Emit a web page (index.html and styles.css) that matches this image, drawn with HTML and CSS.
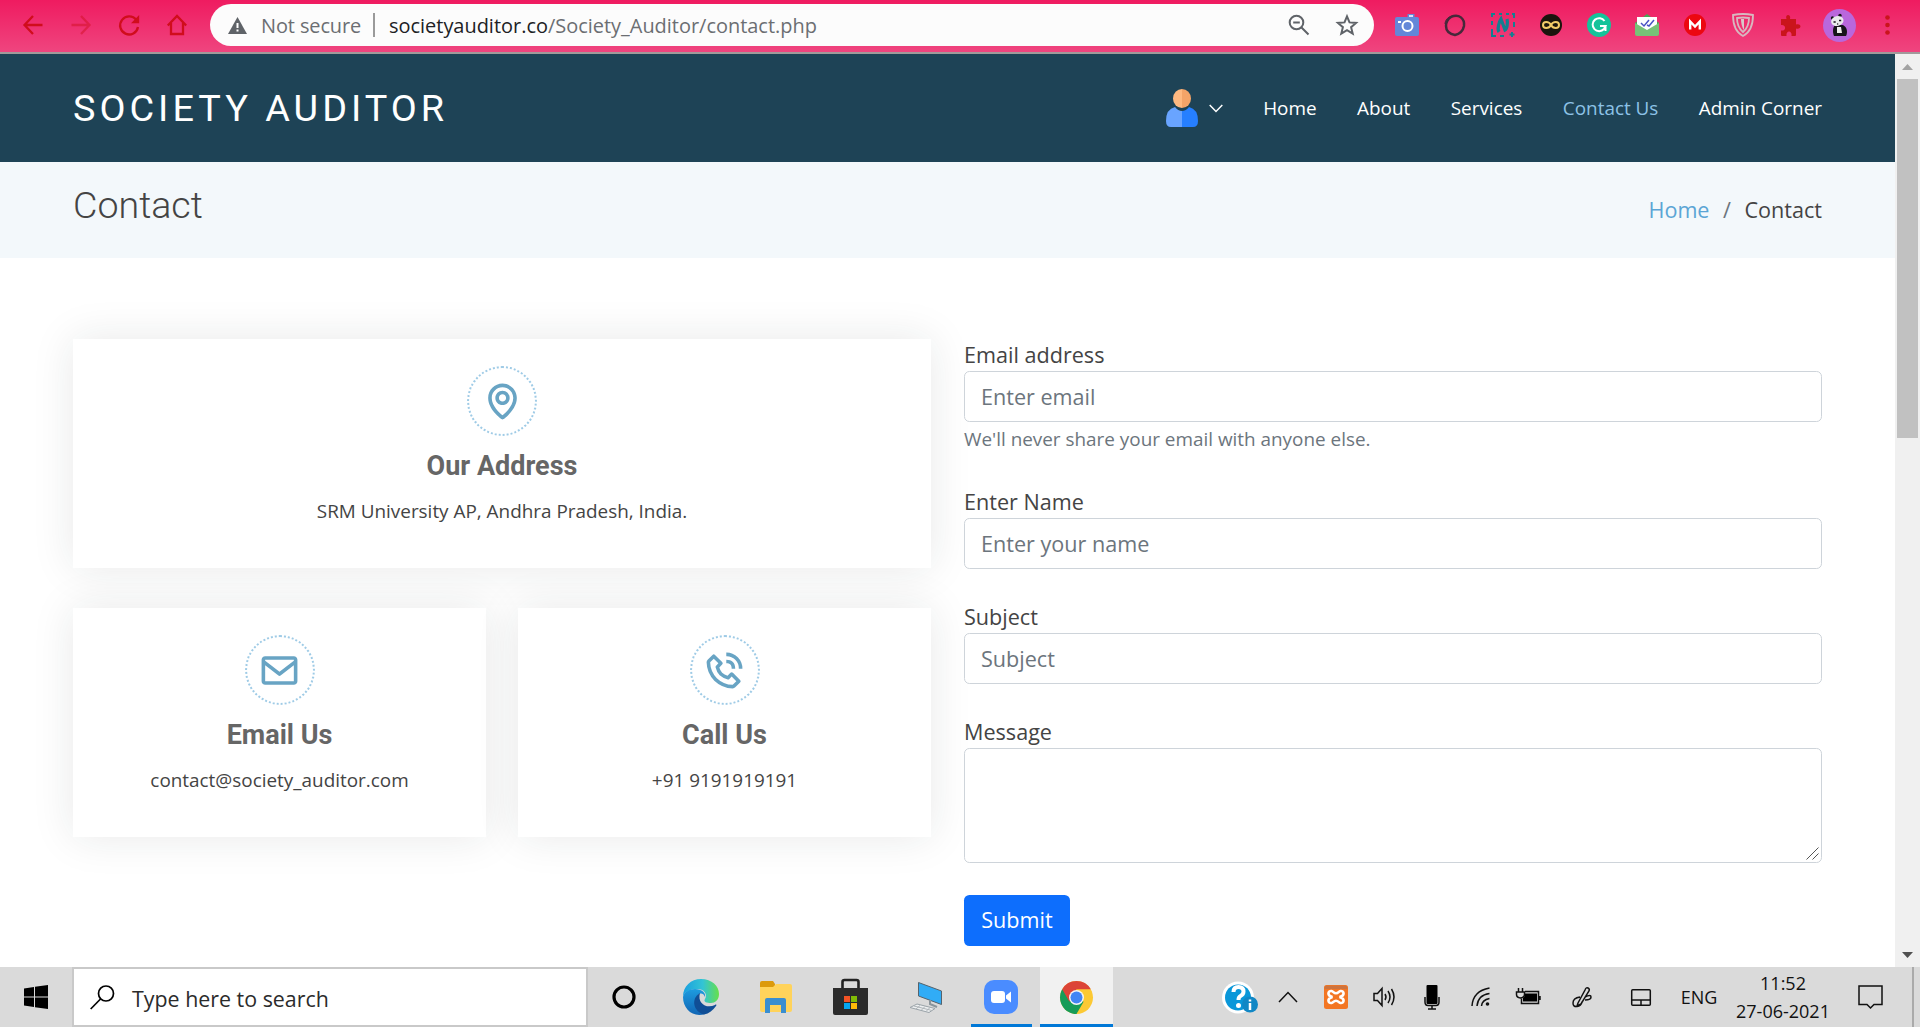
FILE: index.html
```html
<!DOCTYPE html>
<html lang="en">
<head>
<meta charset="utf-8">
<title>Contact - Society Auditor</title>
<link rel="stylesheet" href="styles.css">
</head>
<body>
<div class="toolbar">
  <div class="nav-buttons">
    <span class="cell"><svg width="20" height="20" viewBox="0 0 20 20" class="line"><path d="M19.5 10H2M10 1 1.5 10l8.500 9"/></svg></span>
    <span class="cell faded"><svg width="20" height="20" viewBox="0 0 20 20" class="line"><path d="M.5 10H18M10 1l8.500 9-8.500 9"/></svg></span>
    <span class="cell"><svg width="22" height="22" viewBox="0 0 22 22" class="line"><path d="M18.300 6A9 9 0 1 0 20 13"/><path d="M21.200 1v8.200h-8.200z" fill="#d00d1c" stroke="none"/></svg></span>
    <span class="cell"><svg width="22" height="22" viewBox="0 0 22 22" class="line"><path d="M1.800 11.500 11 2l9.200 9.500M5 9v11h12V9"/></svg></span>
  </div>
  <div class="omnibox">
    <svg class="warn" width="19" height="17" viewBox="0 0 19 17"><path d="M9.500 0 19 17H0z" fill="#5f6368"/><path d="M8.500 6h2v5h-2zM8.500 12.500h2v2h-2z" fill="#fff"/></svg>
    <span class="insecure">Not secure</span>
    <span class="divider"></span>
    <span class="url"><b>societyauditor.co</b>/Society_Auditor/contact.php</span>
    <span class="cell"><svg width="22" height="22" viewBox="0 0 22 22" fill="none" stroke="#5f6368" stroke-width="2"><circle cx="8.500" cy="8.500" r="6.800"/><path d="M13.500 13.500l7 7M5.200 8.500h6.600"/></svg></span>
    <span class="cell"><svg width="22" height="22" viewBox="0 0 22 22" fill="none" stroke="#5f6368" stroke-width="2"><path d="M11 2.300l2.500 6.100 6.600.5-5 4.300 1.600 6.400L11 16.100l-5.700 3.500 1.600-6.400-5-4.300 6.600-.5z"/></svg></span>
  </div>
  <div class="extensions">
    <span class="cell"><svg width="24" height="22" viewBox="0 0 24 22"><rect y="3" width="24" height="19" rx="2" fill="#6487d8"/><path d="M12.500 4V0h7v4z" fill="#6487d8"/><path d="M14 2h4" stroke="#fff" stroke-width="1.500"/><path d="M3 8h3" stroke="#fff" stroke-width="2"/><circle cx="12.500" cy="12" r="5" fill="none" stroke="#fff" stroke-width="2"/></svg></span>
    <span class="cell"><svg width="22" height="22" viewBox="0 0 22 22" fill="none" stroke="#46283a"><path d="M7 3C15-1 21 5 20 12c-1 5-5 8-9 9-5-1-9-4-9-9 0-4 2-7 5-9z" stroke-width="2.500"/><path d="M3 6C8-1 20 1 20 9c0 3-1 7-3 9M1 10C1 4 8 0 14 2" stroke-width="1"/></svg></span>
    <span class="cell"><svg width="24" height="24" viewBox="0 0 24 24" fill="none" stroke="#128091" stroke-width="2"><path d="M1 4V1h3M8 1h3m4 0h3m3 0h2v4M1 8v4m0 4v7h4m4 0h4M23 9v5"/><path d="M8 19c-2-3 0-10 2-13l4 11c2-1 3-7 2-11" stroke-width="3.200"/><path d="M21 19v5m-2.500-2.500h5"/></svg></span>
    <span class="cell"><svg width="22" height="22" viewBox="0 0 22 22"><circle cx="11" cy="11" r="11" fill="#1b140d"/><path d="M11 11c-2-4-8-4-8 0s6 4 8 0 8-4 8 0-6 4-8 0z" fill="none" stroke="#f2cb68" stroke-width="2"/></svg></span>
    <span class="cell"><svg width="24" height="24" viewBox="0 0 24 24"><circle cx="12" cy="12" r="12" fill="#15c39a"/><path d="M17.500 8A6.500 6.500 0 1 0 17 16l1.500-3H13m5.500 0v5" fill="none" stroke="#fff" stroke-width="2"/></svg></span>
    <span class="cell"><svg width="24" height="22" viewBox="0 0 24 22"><path d="M0 9 12 0l12 9v12H0z" fill="#49a552"/><path d="M2 3h20v10l-10 5-10-5z" fill="#fff"/><path d="M0 9l12 7 12-7v11q0 2-2 2H2q-2 0-2-2z" fill="#78c277"/><path d="M6 9l3 3 5-6m-2 5 2 1 5-6" fill="none" stroke="#4b53c5" stroke-width="1.500"/></svg></span>
    <span class="cell"><svg width="22" height="22" viewBox="0 0 22 22"><circle cx="11" cy="11" r="11" fill="#ec0711"/><path d="M6.200 15.500V7.500l4.800 5 4.800-5v8" fill="none" stroke="#fff" stroke-width="2.400"/></svg></span>
    <span class="cell"><svg width="22" height="24" viewBox="0 0 22 24" fill="none" stroke="#d8b8c0" stroke-width="1.800"><path d="M1 2q10-2 20 0 0 16-10 21Q1 18 1 2z"/><path d="M5 5q6-1 12 0 0 9-6 14Q5 14 5 5z"/><path d="M9 6h3v11Q9 13 9 6z" fill="#d8c8ca" stroke="none"/></svg></span>
    <span class="cell"><svg width="22" height="22" viewBox="0 0 22 22"><path d="M1 5h5.500C4.500-.5 11.500-.5 10 5h6v5.500c6-2 6 5.500 0 4V21q0 1-1 1h-3.500c1-6-6-6-5 0H2q-1 0-1-1v-4.500c5.500 1 5.500-6.500 0-5.500z" fill="#ca141c"/></svg></span>
    <span class="cell"><svg width="33" height="33" viewBox="0 0 33 33"><circle cx="16.500" cy="16.500" r="16.500" fill="#b967dc"/><path d="M12 16c-3 3-2 9-1 11h12c2-4 1-9-3-11z" fill="#16151b"/><path d="M14 18h4l1 6h-5z" fill="#eee"/><circle cx="9.500" cy="9" r="1.700" fill="#16151b"/><circle cx="17" cy="6.500" r="1.700" fill="#16151b"/><ellipse cx="14.300" cy="12" rx="6.300" ry="5" transform="rotate(-14 14.300 12)" fill="#e9eaec"/><path d="M10.500 13h2.200m3.300-1.500h2.200m-4 3.500h1" stroke="#16151b" stroke-width="1.600"/></svg></span>
    <span class="cell"><svg width="5" height="20" viewBox="0 0 5 20" fill="#ca141c"><circle cx="2.500" cy="2.500" r="2.300"/><circle cx="2.500" cy="10" r="2.300"/><circle cx="2.500" cy="17.500" r="2.300"/></svg></span>
  </div>
</div>

<div class="viewport">
  <div class="page">
    <header class="site-header">
      <div class="logo">SOCIETY AUDITOR</div>
      <nav class="menu">
        <a class="account"><svg width="32" height="38" viewBox="0 0 32 38"><path d="M16 22Q12 22 9 18 0 20 0 32q0 6 5 6h11z" fill="#69a4ff"/><path d="M16 22q4 0 7-4 9 2 9 14 0 6-5 6H16z" fill="#267fff"/><path d="M16 0a9 9.500 0 0 0 0 19z" fill="#ffb980"/><path d="M16 0a9 9.500 0 0 1 0 19z" fill="#f4a468"/></svg><svg width="14" height="9" viewBox="0 0 14 9" fill="none" stroke="#fff" stroke-width="1.500"><path d="M.7 1 7 7.500 13.300 1"/></svg></a>
        <a>Home</a><a>About</a><a>Services</a><a class="active">Contact Us</a><a>Admin Corner</a>
      </nav>
    </header>
    <section class="banner">
      <h1>Contact</h1>
      <div class="crumbs"><a>Home</a><i>/</i><span>Contact</span></div>
    </section>
    <main class="contact">
      <div class="cards">
        <div class="card wide">
          <span class="ring"><svg width="43" height="43" viewBox="0 0 24 24"><path d="M12 14c2.206 0 4-1.794 4-4s-1.794-4-4-4-4 1.794-4 4 1.794 4 4 4zm0-6c1.103 0 2 .897 2 2s-.897 2-2 2-2-.897-2-2 .897-2 2-2z"/><path d="M11.420 21.814a.998.998 0 0 0 1.160 0C12.884 21.599 20.029 16.440 20 10c0-4.411-3.589-8-8-8S4 5.589 4 9.995c-.029 6.445 7.116 11.604 7.420 11.819zM12 4c3.309 0 6 2.691 6 6.005.021 4.438-4.388 8.423-6 9.730-1.611-1.308-6.021-5.294-6-9.735 0-3.309 2.691-6 6-6z"/></svg></span>
          <h3>Our Address</h3>
          <p>SRM University AP, Andhra Pradesh, India.</p>
        </div>
        <div class="card">
          <span class="ring"><svg width="43" height="43" viewBox="0 0 24 24"><path d="M20 4H4c-1.103 0-2 .897-2 2v12c0 1.103.897 2 2 2h16c1.103 0 2-.897 2-2V6c0-1.103-.897-2-2-2zm0 2v.511l-8 6.223-8-6.222V6h16zM4 18V9.044l7.386 5.745a.994.994 0 0 0 1.228 0L20 9.044 20.002 18H4z"/></svg></span>
          <h3>Email Us</h3>
          <p>contact@society_auditor.com</p>
        </div>
        <div class="card">
          <span class="ring"><svg width="43" height="43" viewBox="0 0 24 24"><path d="M16.570 22a2 2 0 0 0 1.430-.59l2.710-2.710a1 1 0 0 0 0-1.410l-4-4a1 1 0 0 0-1.410 0l-1.600 1.590a7.550 7.550 0 0 1-3-1.590 7.620 7.620 0 0 1-1.590-3l1.590-1.600a1 1 0 0 0 0-1.410l-4-4a1 1 0 0 0-1.410 0L2.590 6A2 2 0 0 0 2 7.430 15.280 15.280 0 0 0 6.300 17.700 15.280 15.280 0 0 0 16.570 22zM6 5.410 8.590 8 7.300 9.290a1 1 0 0 0-.3.910 10.120 10.120 0 0 0 2.300 4.500 10.080 10.080 0 0 0 4.500 2.300 1 1 0 0 0 .910-.270L16 15.410 18.590 18l-2 2a13.280 13.280 0 0 1-8.870-3.710A13.280 13.280 0 0 1 4 7.410zM20 11h2a8.810 8.810 0 0 0-9-9v2a6.770 6.770 0 0 1 7 7z"/><path d="M13 8c2.100 0 3 .9 3 3h2c0-3.220-1.780-5-5-5z"/></svg></span>
          <h3>Call Us</h3>
          <p>+91 9191919191</p>
        </div>
      </div>
      <form class="form">
        <div class="field"><label>Email address</label><input type="text" placeholder="Enter email"><small>We'll never share your email with anyone else.</small></div>
        <div class="field"><label>Enter Name</label><input type="text" placeholder="Enter your name"></div>
        <div class="field"><label>Subject</label><input type="text" placeholder="Subject"></div>
        <div class="field area"><label>Message</label><textarea></textarea><svg class="grip" width="13" height="13" viewBox="0 0 13 13" stroke="#555"><path d="M.5 12.500l12-12M6.500 12.500l6-6"/></svg></div>
        <button type="button">Submit</button>
      </form>
    </main>
  </div>
  <div class="scrollbar">
    <svg width="11" height="6" viewBox="0 0 11 6"><path d="M0 6 5.500 0 11 6z" fill="#a3a3a3"/></svg>
    <span class="thumb"></span>
    <svg width="11" height="6" viewBox="0 0 11 6"><path d="M0 0h11L5.500 6z" fill="#505050"/></svg>
  </div>
</div>

<div class="taskbar">
  <div class="start"><svg width="24" height="24" viewBox="0 0 24 24"><path d="M0 3.400 10 2v9.400H0zM11 1.800 24 0v11.400H11zM0 12.500h10V22L0 20.600zM11 12.500h13V24l-13-1.800z"/></svg></div>
  <div class="search"><svg width="25" height="25" viewBox="0 0 25 25" fill="none" stroke="#000" stroke-width="1.700"><circle cx="16" cy="8.500" r="7.500"/><path d="M10.500 14 .7 24"/></svg><span>Type here to search</span></div>
  <div class="apps">
    <span class="app cortana"><svg width="24" height="24" viewBox="0 0 24 24"><circle cx="12" cy="12" r="10" fill="none" stroke="#000" stroke-width="3.200"/></svg></span>
    <span class="app"><svg width="36" height="36" viewBox="0 0 36 36"><defs><linearGradient id="edgeTop"><stop offset="0" stop-color="#1a9fe0"/><stop offset=".55" stop-color="#33c4d5"/><stop offset="1" stop-color="#66e04a"/></linearGradient><linearGradient id="edgeSide" x2="0" y2="1"><stop offset="0" stop-color="#1d9ce0"/><stop offset="1" stop-color="#1165b4"/></linearGradient></defs><path d="M0 18C0 7 8 0 18 0c11 0 18 7 18 15 0 6-4 9-8 9-4 0-8-1-6-4 3-5-1-10-8-10C7 10 1 13 0 18z" fill="url(#edgeTop)"/><path d="M0 18c1-5 6-8 12-8 7 0 11 4 10 8-2-6-9-4-9 4 0 7 4 12 9 13C10 39 0 30 0 18z" fill="url(#edgeSide)"/><path d="M17 14c-10 6-6 19 4 21.500 5-1 9-4 12-8.500 1-1 0-2-1-1-8 4-18-1-15-12z" fill="#104e96"/></svg></span>
    <span class="app"><svg width="32" height="32" viewBox="0 0 32 32"><path d="M0 7V2q0-2 2-2h11l2 3v4z" fill="#dc9a0c"/><path d="M0 6h13l3-3h14q2 0 2 2v24q0 2-2 2H2q-2 0-2-2z" fill="#ffd35b"/><path d="M5 32V19q0-2 2-2h17q2 0 2 2v13h-5v-8H10v8z" fill="#3a8ed0"/></svg></span>
    <span class="app"><svg width="35" height="36" viewBox="0 0 35 36"><path d="M9.500 10V3q0-2 2-2h12q2 0 2 2v7" fill="none" stroke="#222" stroke-width="2.600"/><path d="M0 9h35v25q0 2-2 2H2q-2 0-2-2z" fill="#2b2b2b"/><path d="M11 17h6v6h-6z" fill="#f35325"/><path d="M18 17h6v6h-6z" fill="#81bc06"/><path d="M11 24h6v6h-6z" fill="#05a6f0"/><path d="M18 24h6v6h-6z" fill="#ffba08"/></svg></span>
    <span class="app"><svg width="32" height="31" viewBox="0 0 32 31"><path d="M8.500.5 31.500 9v13.500L8.500 14z" fill="#31acf6" stroke="#55636d"/><path d="M20 18v4l7 3" fill="none" stroke="#8a959c" stroke-width="2"/><path d="M7 22l18 4.500-6 4L0 25.500z" fill="#eef0f1" stroke="#99a2a8"/><path d="M4 24l18 4.500M10 23.500l-4 3.500m9-2.500-4 4m9-3-4 4" stroke="#adb3b7"/></svg></span>
    <span class="app open"><svg width="34" height="34" viewBox="0 0 34 34"><rect width="34" height="34" rx="10" fill="#4a8cff"/><rect x="7" y="11" width="14" height="12" rx="3" fill="#fff"/><path d="M22 15.500l5-4v11l-5-4z" fill="#fff"/></svg></span>
    <span class="app current"><svg width="33" height="33" viewBox="0 0 33 33"><circle cx="16.500" cy="16.500" r="16.500" fill="#fcc934"/><path d="M2.200 8.300A16.500 16.500 0 0 0 16.500 33l7.100-12.300-7.100-4.200z" fill="#169c58"/><path d="M2.200 8.300l7.200 12.400 7.100-12.400h14.300A16.500 16.500 0 0 0 2.200 8.300z" fill="#dc4437"/><circle cx="16.500" cy="16.500" r="7.500" fill="#f5f5f5"/><circle cx="16.500" cy="16.500" r="6" fill="#4285f4"/></svg></span>
  </div>
  <div class="tray">
    <span class="item"><svg width="36" height="33" viewBox="0 0 36 33"><circle cx="16" cy="16.500" r="16" fill="#fff"/><circle cx="16" cy="16.500" r="13" fill="#0a97d9"/><path d="M11.500 11q0-5 5-5t5 4.500q0 3-3 4.500-2 1-2 4" fill="none" stroke="#fff" stroke-width="4"/><circle cx="16.500" cy="24.500" r="2.500" fill="#fff"/><circle cx="28" cy="23.500" r="8" fill="#1187c5"/><path d="M28 22v7m0-10.500v2" stroke="#fff" stroke-width="2.500"/></svg></span>
    <span class="item"><svg width="20" height="12" viewBox="0 0 20 12" class="ink"><path d="M1 11 10 1.500 19 11"/></svg></span>
    <span class="item"><svg width="24" height="24" viewBox="0 0 24 24"><rect width="24" height="24" rx="2.500" fill="#f37623"/><path d="M.7 3V2Q1 .7 3 .7h18q2 0 2.300 2V4H.7z" fill="#cc7440"/><path d="M8.500 12C2.500 10.500 4 5.500 7.500 6c2 .3 2 2.300 4.500 2.300S14.500 6.300 16.500 6c3.500-.5 5 4.500-1 6 6 1.500 4.500 6.500 1 6-2-.3-2-2.300-4.500-2.300S9.500 17.700 7.500 18c-3.500.5-5-4.500 1-6z" fill="none" stroke="#fff" stroke-width="2.600"/></svg></span>
    <span class="item"><svg width="23" height="20" viewBox="0 0 23 20" class="ink"><path d="M1 6.500h3.500L9 1.500v17L4.500 13.500H1zM12 7q2 3 0 6M15 4q4 6 0 12M18.500 2q5 8 0 16"/></svg></span>
    <span class="item"><svg width="16" height="25" viewBox="0 0 16 25"><rect x="2.500" width="11" height="19" rx="1"/><path d="M1 12v5q0 3.500 3 3.500h8q3 0 3-3.500v-5M8 21v3M4 24h8" class="ink"/></svg></span>
    <span class="item"><svg width="19" height="20" viewBox="0 0 19 20" class="ink"><path d="M1 19Q2 4 18.500 1M6 19Q7 8 18.500 6.500M10.500 19Q11 13 18.500 11.500"/><circle cx="16.500" cy="17" r="1.800" fill="#111" stroke="none"/></svg></span>
    <span class="item"><svg width="25" height="18" viewBox="0 0 25 18"><path d="M9 3.500h13.500v12h-17V10M24 8v4M2.500 0v4m4-4v4M.5 4h8v2.500q0 3-4 3.500-4-.5-4-3.500z" class="ink"/><path d="M9 5.500h12v8H7V10q2-1 2-3z"/></svg></span>
    <span class="item pen"><svg width="20" height="21" viewBox="0 0 20 21" class="ink"><path d="M6 16 13 3q1-3 3-2t1 3L9 17l-4 2zM8 10q-7 1-7 6 0 4 4 3.500T10 15M13 10q6-3 6 0t-6 3"/></svg></span>
    <span class="item pad"><svg width="20" height="17" viewBox="0 0 20 17" class="ink"><rect x=".7" y=".7" width="18.600" height="15.600" rx="1"/><path d="M.7 11h18.600M10 11v5"/></svg></span>
    <span class="item lang">ENG</span>
    <span class="item clock"><span>11:52</span><span>27-06-2021</span></span>
    <span class="item note"><svg width="25" height="24" viewBox="0 0 25 24" class="ink"><path d="M1 1h23v18.500h-8L12.500 23 9 19.500H1z"/></svg></span>
  </div>
</div>
</body>
</html>
```
FILE: styles.css
```css
* { box-sizing: border-box; }
body {
  margin: 0; width: 1920px; height: 1027px; overflow: hidden;
  display: flex; flex-direction: column;
  font-family: "Open Sans", "Noto Sans", sans-serif; font-size: 21.6px; color: #444; background: #fff;
}
svg { display: block; flex: none; overflow: visible; }
h1, h3, p { margin: 0; }

/* browser toolbar */
.toolbar {
  height: 54px; flex: none; display: flex; padding: 4px 9px 6px;
  background: linear-gradient(#ef1b60, #ef457f); border-bottom: 2px solid #a19a9b;
}
.toolbar, .omnibox { align-items: center; }
.nav-buttons, .extensions { display: flex; }
.cell { width: 48px; height: 42px; display: flex; align-items: center; justify-content: center; flex: none; }
.line { fill: none; stroke: #d00d1c; stroke-width: 2.300; }
.faded { opacity: .45; }
.omnibox {
  width: 1164px; height: 42px; margin: 0 9px; padding: 0 3px 0 18px; border-radius: 21px;
  background: #fcfcfc; display: flex; white-space: nowrap; font-size: 19.950px; color: #6b6e72;
}
.insecure { width: 112px; margin-left: 14px; letter-spacing: -.1px; }
.divider { width: 2px; height: 24px; background: #9a9a9a; }
.url { margin-left: 14px; flex: 1; }
.url b { font-weight: 400; color: #202124; }

/* page */
.viewport { height: 913px; flex: none; display: flex; }
.page { width: 1895px; overflow: hidden; }
.site-header {
  height: 108px; padding: 0 73px; background: #1e4356; color: #fff;
  display: flex; align-items: center; justify-content: space-between;
}
.logo { font-family: Roboto, sans-serif; font-size: 37.800px; letter-spacing: 4.020px; }
.menu { display: flex; align-items: center; gap: 40.500px; font-size: 18.900px; }
.account { display: flex; align-items: center; gap: 11px; }
.active { color: #8dc2e6; }
.banner {
  height: 96px; padding: 0 73px; background: #f3f8fb;
  display: flex; align-items: center; justify-content: space-between;
}
.banner h1 { font-family: Roboto, sans-serif; font-weight: 300; font-size: 37.600px; line-height: 45px; padding-bottom: 10px; }
.crumbs { display: flex; padding-bottom: 2px; }
.crumbs a { color: #5ba5d5; }
.crumbs i { font-style: normal; padding: 0 13.500px; color: #6c757d; }
.contact { display: grid; grid-template-columns: 858px 858px; gap: 33px; padding: 81px 73px 0; align-items: start; }
.cards { display: grid; grid-template-columns: 413px 413px; gap: 40px 32px; }
.card {
  height: 229px; padding-top: 27px; background: #fff; box-shadow: 0 0 40px rgba(32, 38, 38, .1);
  display: flex; flex-direction: column; align-items: center;
}
.wide { grid-column: 1 / 3; }
.ring {
  width: 70px; height: 70px; border: 2px dotted #9fcbe6; border-radius: 50%;
  display: flex; align-items: center; justify-content: center;
}
.ring svg { fill: #68a4c4; }
.card h3 { font-family: Roboto, sans-serif; font-size: 27px; font-weight: 700; line-height: 32px; margin: 14px 0 13px; color: #666; }
.card p { font-size: 18.900px; line-height: 32px; }
.form { display: flex; flex-direction: column; gap: 32px; align-items: start; }
.field { width: 858px; display: flex; flex-direction: column; }
.field label { line-height: 32px; }
.field input, .field textarea {
  height: 51px; padding: 0 16px 1px; border: 1px solid #ced4da; border-radius: 5.400px;
  font: inherit; background: #fff; outline: 0;
}
.field textarea { height: 115px; resize: none; }
.field input::placeholder { color: #6c757d; opacity: 1; }
.field small { height: 32px; padding-top: 4px; font-size: 18.900px; line-height: 27px; color: #6c757d; }
.area { position: relative; }
.grip { position: absolute; right: 3px; bottom: 3px; }
.form button {
  width: 106px; height: 51px; border: 0; border-radius: 5.400px; padding: 0 0 2px;
  font: inherit; color: #fff; background: #0d6efd;
}
.scrollbar { width: 25px; background: #f0f0f0; display: flex; flex-direction: column; align-items: center; padding: 10px 0 9px; }
.thumb { width: 21px; height: 359px; margin: 9px 0 auto; background: #c1c1c1; }

/* taskbar */
.taskbar { height: 60px; flex: none; display: flex; background: #dadada; }
.start { width: 72px; display: flex; align-items: center; justify-content: center; }
.search {
  width: 516px; border: 2px solid #c9c9c9; background: #fff; padding-left: 16px;
  display: flex; align-items: center; gap: 17px; font-size: 21.400px; color: #2b2b2b;
}
.search span { padding-top: 3px; }
.apps { display: flex; }
.app { width: 75px; display: flex; align-items: center; justify-content: center; }
.cortana { padding-right: 4px; }
.open { background: linear-gradient(#0078d7, #0078d7) 8px 57px / 61px 3px no-repeat; }
.current { width: 73px; margin-left: 2px; border-bottom: 3px solid #0078d7; padding-top: 3px; background: #f1f1f1; }
.tray { display: flex; width: 698px; margin-left: 103px; border-right: 2px solid #aaa; }
.item { width: 48px; display: flex; align-items: center; justify-content: center; flex: none; }
.ink { fill: none; stroke: #111; stroke-width: 1.500; }
.pen { width: 60px; }
.pad { width: 58px; }
.lang { width: 58px; font-size: 18px; color: #111; }
.clock { width: 110px; flex-direction: column; gap: 4px; font-size: 18px; line-height: 24px; color: #111; }
.note { width: 64px; }
```
